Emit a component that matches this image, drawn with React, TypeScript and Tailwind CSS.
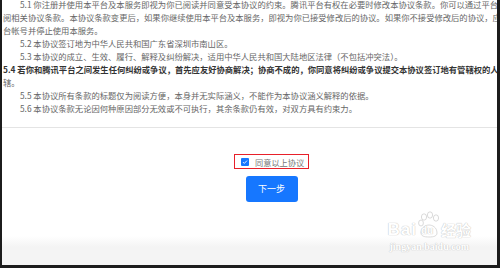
import React from 'react';

const cjk = { fontFamily: '"Noto Sans CJK SC", "Liberation Sans", sans-serif' };

function Line({ children, indent, bold }: { children: React.ReactNode; indent?: boolean; bold?: boolean }) {
  return (
    <div
      className={`h-[13px] leading-[13px] whitespace-nowrap ${indent ? 'pl-[17px]' : ''} ${
        bold ? 'font-bold text-[#333]' : 'text-[#666]'
      }`}
    >
      {children}
    </div>
  );
}

function Watermark() {
  return (
    <div
      className="absolute right-[26px] bottom-[12px] flex flex-col items-center text-white select-none"
      style={{ textShadow: '0 0 1px #c4c4c4, 0 0 1px #c4c4c4' }}
    >
      <div className="flex items-end">
        <span className="text-[17px] font-bold leading-[17px] tracking-[1px]" style={{ fontFamily: '"Liberation Sans", sans-serif' }}>
          Bai
        </span>
        <div className="relative w-[22px] h-[27px] mx-[1px]">
          <svg width="22" height="27" viewBox="0 0 22 27" className="absolute inset-0">
            <g fill="#fff" stroke="#d0d0d0" strokeWidth="0.8">
              <ellipse cx="6" cy="6" rx="2.6" ry="3.2" />
              <ellipse cx="12" cy="4" rx="2.6" ry="3.2" />
              <ellipse cx="18" cy="7" rx="2.6" ry="3.2" />
              <ellipse cx="3" cy="12" rx="2.4" ry="3" />
              <path d="M3 22c0-6 5-8 8-8s8 2 8 8c0 3-3 4-8 4s-8-1-8-4z" />
            </g>
          </svg>
          <span
            className="absolute left-[3px] bottom-[2px] text-[10px] font-bold leading-[10px] text-white"
            style={{ fontFamily: '"Liberation Sans", sans-serif' }}
          >
            du
          </span>
        </div>
        <span className="text-[15px] font-bold leading-[17px]" style={cjk}>
          经验
        </span>
      </div>
      <div className="text-[10px] leading-[12px] mt-[3px] font-bold" style={{ fontFamily: '"Liberation Serif", serif' }}>
        jingyan.baidu.com
      </div>
    </div>
  );
}

export default function App() {
  return (
    <div
      className="relative w-[500px] h-[268px] overflow-hidden border-l-2 border-r-[3px] border-b-[3px] border-[#1c1c1c] bg-[linear-gradient(to_bottom,#fff_236px,#f4f4f4_247px)]"
      style={cjk}
    >
      <div className="text-[8.3px] -mt-[2px] pl-[1px] overflow-hidden">
        <Line indent>5.1 你注册并使用本平台及本服务即视为你已阅读并同意受本协议的约束。腾讯平台有权在必要时修改本协议条款。你可以通过平台</Line>
        <Line>阅相关协议条款。本协议条款变更后，如果你继续使用本平台及本服务，即视为你已接受修改后的协议。如果你不接受修改后的协议，应</Line>
        <Line>台帐号并停止使用本服务。</Line>
        <Line indent>5.2 本协议签订地为中华人民共和国广东省深圳市南山区。</Line>
        <Line indent>5.3 本协议的成立、生效、履行、解释及纠纷解决，适用中华人民共和国大陆地区法律（不包括冲突法）。</Line>
        <Line bold>5.4 若你和腾讯平台之间发生任何纠纷或争议，首先应友好协商解决；协商不成的，你同意将纠纷或争议提交本协议签订地有管辖权的人民</Line>
        <Line>辖。</Line>
        <Line indent>5.5 本协议所有条款的标题仅为阅读方便，本身并无实际涵义，不能作为本协议涵义解释的依据。</Line>
        <Line indent>5.6 本协议条款无论因何种原因部分无效或不可执行，其余条款仍有效，对双方具有约束力。</Line>
      </div>

      <div className="mt-[12px] h-px bg-[#e4e4e4]" />

      <div className="flex flex-col items-center pl-[44px] pt-[26px]">
        <div className="flex items-center gap-[6px] border-[1.5px] border-[#e8202a] w-[75px] h-[15px] pl-[6px]">
          <div className="w-[8px] h-[8px] rounded-[1px] bg-[#1677ff] flex items-center justify-center">
            <svg width="6" height="6" viewBox="0 0 6 6">
              <path d="M1 3.1l1.3 1.3L5 1.6" fill="none" stroke="#fff" strokeWidth="0.9" />
            </svg>
          </div>
          <span className="text-[8.2px] leading-[10px] text-[#777]">同意以上协议</span>
        </div>
        <button className="mt-[7px] w-[52px] h-[26px] rounded-[3px] bg-[#1677ff] text-white text-[9px] flex items-center justify-center">
          下一步
        </button>
      </div>

      <Watermark />
    </div>
  );
}
